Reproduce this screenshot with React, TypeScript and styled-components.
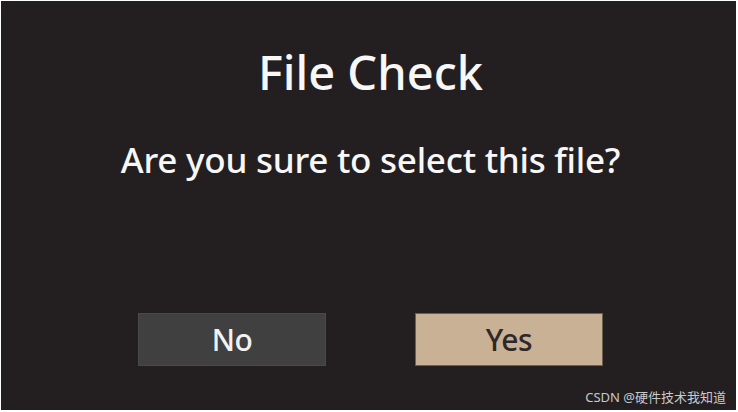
import React from "react";
import styled, { createGlobalStyle } from "styled-components";

const Global = createGlobalStyle`
  html, body { margin: 0; padding: 0; background: #ffffff; }
  #root { width: 738px; height: 412px; }
`;

const Screen = styled.div`
  box-sizing: border-box;
  width: 735px;
  height: 409px;
  margin: 1px 2px 2px 1px;
  padding-left: 4px;
  background: #231f20;
  position: relative;
  display: flex;
  flex-direction: column;
  align-items: center;
  font-family: "Noto Sans", "Open Sans", sans-serif;
  color: #f7f7f7;
`;

const Title = styled.h1`
  margin: 41px 0 0 0;
  font-size: 47px;
  font-weight: 500;
  line-height: 60px;
  letter-spacing: 0px;
`;

const Message = styled.p`
  margin: 34px 0 0 0;
  font-size: 35px;
  font-weight: 500;
  line-height: 48px;
  letter-spacing: -0.25px;
`;

const Actions = styled.div`
  margin-top: auto;
  margin-bottom: 44px;
  display: flex;
  gap: 89px;
`;

const Button = styled.button<{ $primary?: boolean }>`
  box-sizing: border-box;
  width: 188px;
  height: 53px;
  display: flex;
  align-items: center;
  justify-content: center;
  font-family: "Noto Sans", "Open Sans", sans-serif;
  font-size: 30px;
  font-weight: 500;
  letter-spacing: -0.5px;
  padding: 0;
  cursor: pointer;
  background: ${(p) => (p.$primary ? "#c9b196" : "#404040")};
  color: ${(p) => (p.$primary ? "#2f2828" : "#f2f2f2")};
  border: 1px solid ${(p) => (p.$primary ? "#6f5f4f" : "#4a4a4a")};
`;

const Watermark = styled.span`
  position: absolute;
  right: 10px;
  bottom: 4px;
  font-family: "Noto Sans", "Noto Sans CJK SC", sans-serif;
  font-size: 13px;
  color: #c9c9c9;
`;

export default function App() {
  return (
    <>
      <Global />
      <Screen>
        <Title>File Check</Title>
        <Message>Are you sure to select this file?</Message>
        <Actions>
          <Button>No</Button>
          <Button $primary>Yes</Button>
        </Actions>
        <Watermark>CSDN @硬件技术我知道</Watermark>
      </Screen>
    </>
  );
}
